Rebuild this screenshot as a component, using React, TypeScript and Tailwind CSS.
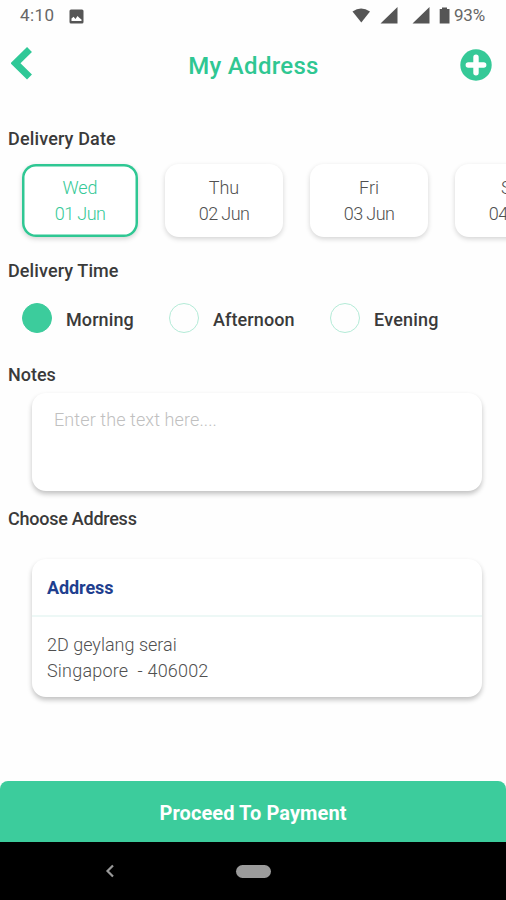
import React from "react";

type DeliveryDay = { day: string; date: string };

const days: DeliveryDay[] = [
  { day: "Wed", date: "01 Jun" },
  { day: "Thu", date: "02 Jun" },
  { day: "Fri", date: "03 Jun" },
  { day: "Sat", date: "04 Jun" },
];

const slots = [
  { label: "Morning", box: "w-[147px]", text: "tracking-[0.1px]" },
  { label: "Afternoon", box: "w-[161px]", text: "tracking-[0.1px]" },
  { label: "Evening", box: "w-[130px]", text: "tracking-[0.2px]" },
];

function StatusBar() {
  return (
    <div className="flex h-8 shrink-0 items-center pl-5 text-[17px] text-[#666]">
      <span className="w-[49px] whitespace-nowrap tracking-[0.4px]">4:10</span>
      <svg className="h-[15px] w-[15px]" viewBox="0 0 15 15">
        <rect x="0.5" y="0.5" width="14" height="14" rx="1.5" fill="#555" />
        <path d="M2.500 12v-2.500l2-1.700 2 2.200 2-3 2 2 2 1.500V12z" fill="#fff" />
      </svg>
      <svg className="ml-[268px] h-[18px] w-[84px] shrink-0" viewBox="0 0 84 18">
        <path d="M0.5 4.5Q9 -1.5 18 4.5L9.3 15.5z" fill="#555" />
        <path d="M28.500 16.500 45.500 0v16.500zM60.500 16.500 77.500 0v16.500z" fill="#555" />
      </svg>
      <svg className="ml-[3px] h-[18px] w-[11px] shrink-0" viewBox="0 0 11 18">
        <path d="M3 .5h5v1.500h2.500v14.500H.7V2H3z" fill="#555" />
      </svg>
      <span className="ml-[4px] tracking-[-0.2px]">93%</span>
    </div>
  );
}

function Header() {
  return (
    <header className="flex h-[66px] shrink-0 items-center justify-between pl-[11px] pr-[14px]">
      <svg className="-mt-1 h-[34px] w-[22px]" viewBox="0 0 22 34">
        <path d="M18.500 3.500 4.500 17.200 18.500 31" fill="none" stroke="#2fc897" strokeWidth="7" />
      </svg>
      <h1 className="pt-[2px] pl-[14px] text-[24px] leading-8 font-medium tracking-[0.3px] text-[#2fc792]">My Address</h1>
      <svg className="h-8 w-8" viewBox="0 0 32 32">
        <circle cx="16" cy="16" r="15.700" fill="#35c997" />
        <path d="M16 8.300v15.400M8.300 16h15.400" stroke="#fff" strokeWidth="5.400" strokeLinecap="round" />
      </svg>
    </header>
  );
}

function SectionTitle({ children, className }: { children: React.ReactNode; className: string }) {
  return <h2 className={`h-6 shrink-0 pl-2 text-[18px] leading-6 font-medium whitespace-nowrap text-[#3a3a3a] ${className}`}>{children}</h2>;
}

function DateCard({ item, selected }: { item: DeliveryDay; selected: boolean }) {
  return (
    <button
      className={`flex h-[73px] shrink-0 flex-col items-center justify-center rounded-[14px] bg-white pt-px text-[18px] leading-[26px] font-light shadow-[0_2px_5px_rgba(0,0,0,0.17)] ${
        selected ? "w-[116px] text-[#35c997] inset-ring-[2.5px] inset-ring-[#2fc793]" : "w-[118px] text-[#505050]"
      }`}
    >
      <span>{item.day}</span>
      <span className="tracking-[-0.6px]">{item.date}</span>
    </button>
  );
}

export default function App() {
  return (
    <div className="flex h-[900px] w-[506px] flex-col overflow-hidden bg-[#fefefe] font-['Roboto','Liberation_Sans',sans-serif]">
      <StatusBar />
      <Header />
      <main className="flex min-h-0 flex-1 flex-col pt-[29px]">
        <SectionTitle className="tracking-[0.15px]">Delivery Date</SectionTitle>
        <div className="mt-[13px] flex shrink-0 gap-[27px] pl-[22px]">
          {days.map((item, i) => (
            <DateCard key={item.date} item={item} selected={i === 0} />
          ))}
        </div>
        <SectionTitle className="mt-[22px] tracking-[0.1px]">Delivery Time</SectionTitle>
        <div className="mt-5 flex h-[30px] shrink-0 items-center pl-[22px]">
          {slots.map((slot, i) => (
            <label key={slot.label} className={`flex items-center gap-[14px] ${slot.box}`}>
              <span className={`h-[30px] w-[30px] shrink-0 rounded-full border ${i === 0 ? "border-[#3ccc9c] bg-[#3ccc9c]" : "border-[#b3ebd7]"}`} />
              <span className={`pt-1 text-[18px] leading-6 font-medium text-[#3a3a3a] ${slot.text}`}>{slot.label}</span>
            </label>
          ))}
        </div>
        <SectionTitle className="mt-[30px]">Notes</SectionTitle>
        <textarea
          className="mt-[6px] ml-8 block h-[98px] w-[450px] shrink-0 resize-none rounded-[14px] bg-white px-[22px] pt-[15px] text-[18px] leading-6 font-light tracking-[0.1px] shadow-[0_3px_5px_rgba(0,0,0,0.24)] outline-none placeholder:text-[#c0c0c0]"
          placeholder="Enter the text here...."
        />
        <SectionTitle className="mt-[16px] tracking-[-0.25px]">Choose Address</SectionTitle>
        <section className="mt-7 ml-8 h-[138px] w-[450px] shrink-0 rounded-[14px] bg-white shadow-[0_3px_5px_rgba(0,0,0,0.24)]">
          <h3 className="h-[58px] border-b-2 border-[#edf8f6] pl-[15px] text-[18px] leading-[58px] font-bold tracking-[-0.1px] text-[#1f3f8f]">Address</h3>
          <div className="pt-[15px] pl-[15px] text-[18px] leading-[26px] font-light whitespace-pre text-[#505050]">
            <p>2D geylang serai</p>
            <p className="tracking-[0.2px]">{"Singapore  - 406002"}</p>
          </div>
        </section>
      </main>
      <button className="h-[61px] shrink-0 rounded-t-lg bg-[#3ccc9c] pt-[2px] text-[20px] font-bold tracking-[0.1px] text-white">Proceed To Payment</button>
      <nav className="flex h-[58px] shrink-0 items-center bg-black pl-[105px]">
        <svg className="h-[14px] w-[10px]" viewBox="0 0 10 14">
          <path d="M8 1.500 2.500 7 8 12.500" fill="none" stroke="#999" strokeWidth="2.200" />
        </svg>
        <span className="ml-[121px] h-[13px] w-[35px] rounded-full bg-[#9b9b9b]" />
      </nav>
    </div>
  );
}
